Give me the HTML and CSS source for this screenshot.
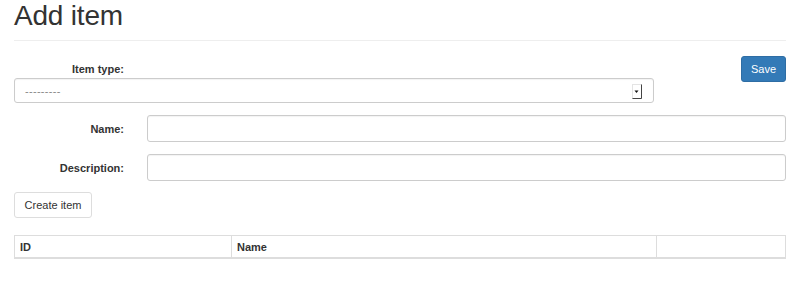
FILE: index.html
```html
<!DOCTYPE html>
<html lang="en">
<head>
    <meta charset="UTF-8">
    <title>Add item</title>
    <link rel="stylesheet" href="styles.css">
</head>
<body>
    <div class="container">
        <div class="page-header">
            <h1>Add item</h1>
        </div>

        <form class="item-form">
            <div class="top-row">
                <div class="type-group">
                    <label class="type-label" for="itemType">Item type:</label>
                    <div class="select-wrap">
                        <select id="itemType" class="form-control">
                            <option>---------</option>
                        </select>
                        <svg class="select-arrow" width="10" height="15" viewBox="0 0 10 15">
                            <rect x="0.5" y="0.5" width="9" height="14" fill="#fff" stroke="#e4e4e4"/>
                            <path d="M9.5 0.5V14.5H0.5" fill="none" stroke="#444"/>
                            <path d="M2.5 6.5H6.5L4.5 9Z" fill="#111"/>
                        </svg>
                    </div>
                </div>
                <button type="button" class="btn btn-primary">Save</button>
            </div>

            <div class="form-row">
                <label for="name">Name:</label>
                <input id="name" type="text" class="form-control">
            </div>
            <div class="form-row">
                <label for="description">Description:</label>
                <input id="description" type="text" class="form-control">
            </div>

            <button type="button" class="btn btn-default">Create item</button>
        </form>

        <table class="items-table">
            <thead>
                <tr>
                    <th class="col-id">ID</th>
                    <th class="col-name">Name</th>
                    <th class="col-actions"></th>
                </tr>
            </thead>
        </table>
    </div>
</body>
</html>
```

FILE: styles.css
```css
body {
    margin: 0;
    font-family: 'Liberation Sans', Arial, sans-serif;
    font-size: 11px;
    color: #333;
    background: #fff;
}
.container {
    padding: 0 13px 0 14px;
}
.page-header {
    padding-bottom: 9px;
    border-bottom: 1px solid #eee;
}
h1 {
    margin: 0;
    font-size: 28px;
    font-weight: normal;
    line-height: 31px;
    letter-spacing: -0.2px;
}
.item-form {
    margin-top: 15px;
}
.top-row {
    display: flex;
    align-items: flex-start;
}
.type-group {
    width: 640px;
}
.type-label {
    display: block;
    width: 110px;
    text-align: right;
    font-weight: bold;
    line-height: 15px;
    margin: 6px 0 1px;
}
.select-wrap {
    position: relative;
}
.select-arrow {
    position: absolute;
    right: 12px;
    top: 6px;
}
.form-control {
    box-sizing: border-box;
    width: 100%;
    height: 27px;
    padding: 0 10px;
    font-family: inherit;
    font-size: 11px;
    color: #555;
    background: #fff;
    border: 1px solid #ccc;
    border-radius: 3px;
    box-shadow: inset 0 1px 1px rgba(0,0,0,0.05);
    margin: 0;
}
select.form-control {
    height: 25px;
    appearance: none;
    -webkit-appearance: none;
    color: #888;
    letter-spacing: 0.3px;
}
.btn {
    box-sizing: border-box;
    height: 26px;
    padding: 0 10px;
    font-family: inherit;
    font-size: 11px;
    border: 1px solid transparent;
    border-radius: 3px;
    cursor: pointer;
}
.btn-primary {
    margin-left: auto;
    width: 45px;
    padding: 0;
    color: #fff;
    background: #337ab7;
    border-color: #2e6da4;
}
.btn-default {
    margin-top: 11px;
    width: 78px;
    padding: 0;
    color: #333;
    background: #fff;
    border-color: #ddd;
}
.form-row {
    display: grid;
    grid-template-columns: 110px 1fr;
    column-gap: 23px;
    align-items: center;
    margin-top: 12px;
}
.form-row label {
    text-align: right;
    font-weight: bold;
}
.items-table {
    width: 100%;
    margin-top: 17px;
    border-collapse: collapse;
    border: 1px solid #ddd;
}
.items-table th {
    height: 21px;
    padding: 0 5px;
    text-align: left;
    font-weight: bold;
    border-left: 1px solid #ddd;
    border-bottom: 2px solid #ddd;
}
.col-id {
    width: 206px;
}
.col-name {
    width: 414px;
}
```
